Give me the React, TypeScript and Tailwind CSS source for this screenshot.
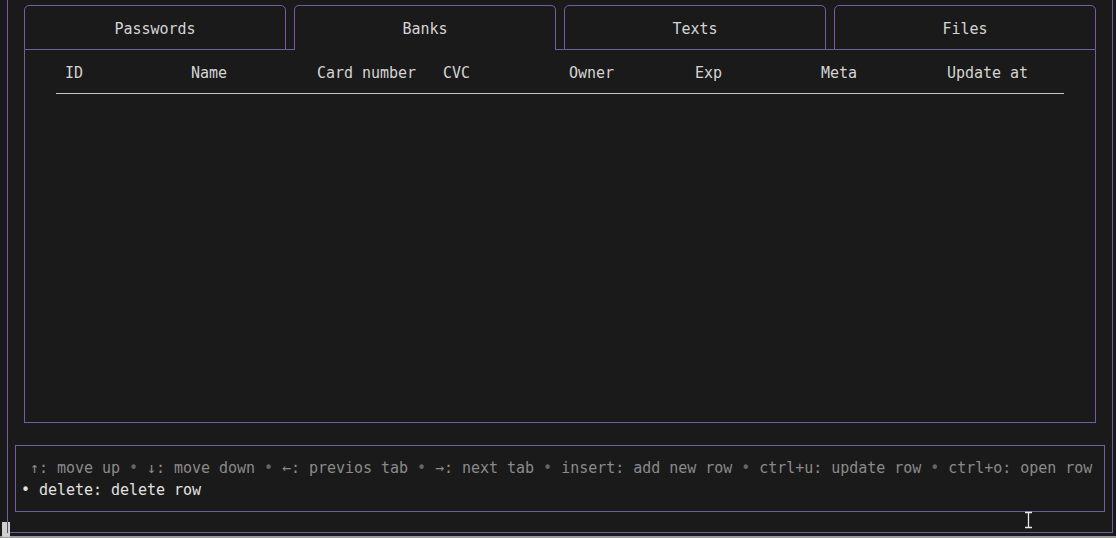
import React from 'react';

const tabs = ['Passwords', 'Banks', 'Texts', 'Files'];
const active = 1;
const columns = ['ID', 'Name', 'Card number', 'CVC', 'Owner', 'Exp', 'Meta', 'Update at'];

function Tab({ label, isActive }: { label: string; isActive: boolean }) {
  return (
    <div
      className={
        isActive
          ? 'flex-1 h-[45px] border-t border-x border-[#745c9e] rounded-t-[5px] flex justify-center pt-[12px]'
          : 'flex-1 h-[45px] border border-[#745c9e] rounded-t-[5px] flex justify-center pt-[12px]'
      }
    >
      <span className="text-[#d4d4d4] leading-[22px] h-[22px]">{label}</span>
    </div>
  );
}

function App() {
  return (
    <div
      className="relative w-[1116px] h-[538px] bg-[#1a1a1a] overflow-hidden text-[15px] tracking-[-0.03px]"
      style={{ fontFamily: '"DejaVu Sans Mono", "Liberation Mono", monospace' }}
    >
      <div className="ml-[7px] mr-[3px] h-[533px] border-x border-b border-[#745c9e] flex flex-col">
        <div className="pt-[5px] mx-[16px]">
          <div className="flex">
            {tabs.map((t, i) => (
              <React.Fragment key={t}>
                {i > 0 && <div className="w-[8px] h-[45px] border-b border-[#745c9e]" />}
                <Tab label={t} isActive={i === active} />
              </React.Fragment>
            ))}
          </div>
          <div className="h-[373px] border-x border-b border-[#745c9e]">
            <div className="ml-[31px] w-[1008px] pt-[12px]">
              <div className="flex h-[22px] leading-[22px] text-[#d4d4d4]">
                {columns.map((c) => (
                  <div key={c} className="w-[126px] pl-[9px] whitespace-pre">
                    {c}
                  </div>
                ))}
              </div>
              <div className="mt-[9px] h-px bg-[#c8c8c8]" />
            </div>
          </div>
        </div>

        <div className="mt-[22px] mx-[7px] h-[67px] border border-[#745c9e] pt-[11px] pl-[5px] leading-[22px] whitespace-pre">
          <div className="text-[#8a8a8a]">
            {' ↑: move up '}
            <span className="text-[#666]">•</span>
            {' ↓: move down '}
            <span className="text-[#666]">•</span>
            {' ←: previos tab '}
            <span className="text-[#666]">•</span>
            {' →: next tab '}
            <span className="text-[#666]">•</span>
            {' insert: add new row '}
            <span className="text-[#666]">•</span>
            {' ctrl+u: update row '}
            <span className="text-[#666]">•</span>
            {' ctrl+o: open row'}
          </div>
          <div className="text-[#e2e2e2]">• delete: delete row</div>
        </div>
      </div>
      <div className="mt-[3px] h-[2px] bg-[#9a9a9a]" />

      {/* terminal cursor block */}
      <div className="absolute left-[2px] top-[522px] w-[8px] h-[15px] bg-[#cfcfcf]">
        <div className="absolute left-[5px] top-0 w-px h-[11px] bg-[#555]" />
      </div>

      {/* mouse I-beam */}
      <svg className="absolute left-[1023px] top-[511px]" width="11" height="18" viewBox="0 0 11 18">
        <path d="M2 1.5h7M2 16.5h7M5.5 1.5v15" stroke="#e8e8e8" strokeWidth="1.3" fill="none" />
      </svg>
    </div>
  );
}

export default App;
